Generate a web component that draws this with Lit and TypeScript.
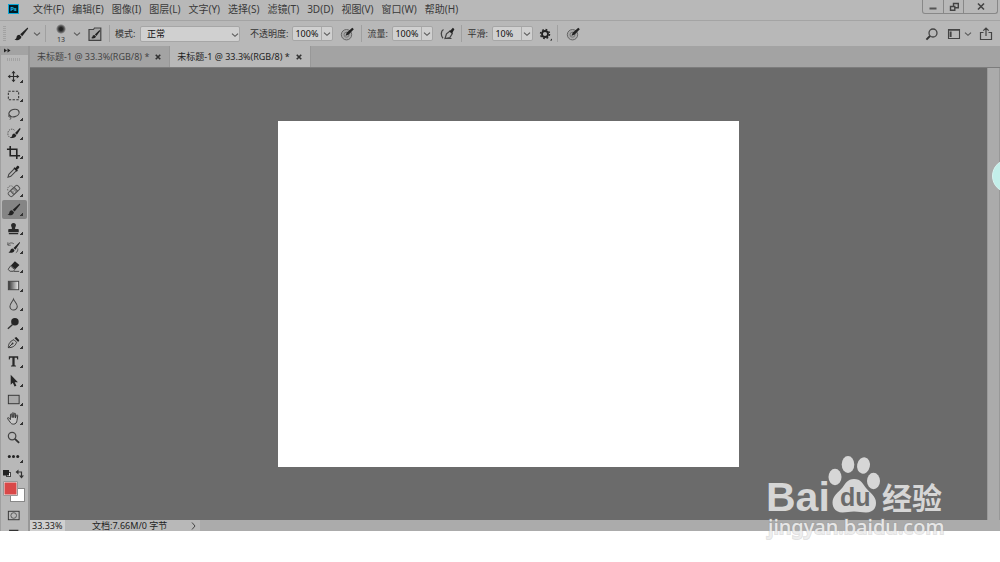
import { LitElement, html, svg, css, nothing, type SVGTemplateResult } from "lit";
import { customElement, property, state } from "lit/decorators.js";
import { classMap } from "lit/directives/class-map.js";

const brush = svg`<path d="M14.6 1.6 7.2 8.2l2 2 6-7.6z" fill="#222"/><path d="M6.4 8.8c-2 0-2.6 1.2-2.9 2.6-.2 1-.8 1.8-2 2.3 2.800 1 6.400.4 7-2.900z" fill="#222"/>`;
const smallBrush = svg`<path d="M14.800 2 9.600 7.400l2 2 4-6.400z" fill="#222"/><path d="M9 8c-2 0-2.200 1.300-2.500 2.400-.2.900-.7 1.500-1.700 2 2.600.8 5.600.2 6.200-2.600z" fill="#222"/>`;

const icons: Record<string, SVGTemplateResult> = {
  brush,
  move: svg`<path d="M8 3v10M3 8h10" stroke="#2c2c2c" stroke-width="1.200"/><path d="M8 1.800 5.800 4.500h4.400zM8 14.200l-2.200-2.700h4.400zM1.800 8l2.700-2.200v4.400zM14.200 8l-2.700-2.200v4.400z" fill="#2c2c2c"/>`,
  marquee: svg`<rect x="2.500" y="3.500" width="11" height="9" stroke="#333" stroke-width="1.100" stroke-dasharray="2.500 1.500"/>`,
  lasso: svg`<ellipse cx="8.500" cy="6.500" rx="5.600" ry="3.900" transform="rotate(-15 8.500 6.500)" stroke="#444" stroke-width="1.200"/><path d="M3.500 8.500c-1.500 1-.5 2.600.8 2 1.500-.7 0-2.200-.8-1.500M4.500 10.500c1.200 1 .6 2-.3 3" stroke="#444"/>`,
  quick: svg`<path d="M9 4.500C7.500 2.500 3 3 2.200 6.500S3 12.500 6 12.500" stroke="#555" stroke-dasharray="1.500 1"/>${smallBrush}`,
  crop: svg`<path d="M4.500 1v10.500H15M1 4.500h10.500V15" stroke="#222" stroke-width="1.700"/>`,
  dropper: svg`<path d="m9 5-6 6-.9 3 3-.9 6-6" stroke="#444" stroke-width="1.100"/><path d="m8 4.500 1.200-1 1 .8 1.400-2c1-1.200 3.400.5 2.300 2l-2 1.700.8 1-1.200 1.200z" fill="#222"/>`,
  heal: svg`<path d="M2 8c-1.500-4 3-6.500 5.500-4" stroke="#666" stroke-dasharray="1.500 1"/><g transform="rotate(-43 8.500 8.500)"><rect x="1.700" y="5.700" width="13.600" height="5.600" rx="1.800" fill="#b8b8b8" stroke="#555"/><rect x="5.700" y="5.700" width="5.600" height="5.600" fill="#8b8b8b" stroke="#555"/><path d="M7.500 7.500h2M7.500 9.500h2" stroke="#eee" stroke-dasharray="1 1"/></g>`,
  stamp: svg`<path d="M8 2a2.600 2.600 0 0 0-2.400 3.600c.5 1.100.9 1.600.6 3H3.400c-.7 0-1 .5-1 1.200V12h11.200V9.800c0-.7-.3-1.200-1-1.200H9.800c-.3-1.400.1-1.900.6-3A2.600 2.600 0 0 0 8 2zM3 12.800h10v1.200H3z" fill="#292929"/>`,
  history: svg`<path d="M2 5c2-2.500 5-2.200 6.500-.8M2 2.500V5.500h3M12.500 9c.5 2-.5 4-2 4.600" stroke="#555"/><path d="M14.600 2 8 8.500l2 2 5-7.500zM7.400 9c-1.800 0-2.500 1-2.800 2.200-.2.900-1 1.600-2 2 2.600 1 6 .3 6.500-2.400z" fill="#222"/>`,
  eraser: svg`<path d="m9.500 2.500 4.800 3.800-4.500 4.700-4.600-4z" fill="#222"/><path d="m4.800 7.400 4.600 4-1.700 1.700H4.400l-2.200-2zM8 13.200h6" stroke="#444" stroke-width="1"/>`,
  gradient: svg`<defs><linearGradient id="g"><stop stop-color="#333"/><stop offset="1" stop-color="#eee"/></linearGradient></defs><rect x="2.500" y="3.500" width="11" height="9" fill="url(#g)" stroke="#444"/>`,
  blur: svg`<path d="M8 2.200C7 5 4.200 7 4.200 10a3.900 3.900 0 0 0 7.800 0C12 7 9 5 8 2.200z" stroke="#444" stroke-width="1.100"/>`,
  dodge: svg`<circle cx="9.500" cy="6.200" r="4" fill="#262626"/><path d="m7 9-5 4.600" stroke="#333" stroke-width="1.500"/>`,
  pen: svg`<path d="M2.500 13.500c0-3 .8-6.500 6-8.500l2.700 2.700c-1.200 4.500-4.700 5.800-8.700 5.800zm0 0 4-4" stroke="#333"/><circle cx="7" cy="9" r="1" fill="#333"/><path d="m9 3.300 2-1.300 3.200 3.500-1.200 2z" fill="#222"/>`,
  type: svg`<path d="M3 2.500h10v3.300h-1L11.500 4H9.200v8l1.500.4v1H5.300v-1l1.500-.4V4H4.500L4 5.800H3z" fill="#282828"/>`,
  select: svg`<path d="M5 1.800v10.700l2.300-2 1.800 4 2-.9-1.800-3.800h3.400z" fill="#262626"/>`,
  shape: svg`<rect x="2.500" y="3.500" width="11.500" height="9" fill="#aaa" stroke="#333"/>`,
  hand: svg`<path d="M4.500 12 2 8.600c-1-1.400.4-2 1.200-1l1.500 1.600V4c0-1.200 1.500-1.200 1.600 0L6.600 7V2.700c0-1.200 1.600-1.200 1.700 0V7l.4-3.900c.1-1.100 1.600-.9 1.500.2L10.100 7.500l.9-2.700c.4-1 1.700-.6 1.500.4l-.8 5c-.3 2-1.200 3.800-3.500 3.800S5.300 13.200 4.500 12z" fill="#c6c6c6" stroke="#333"/>`,
  zoom: svg`<circle cx="6.500" cy="6.500" r="4" stroke="#444" stroke-width="1.300"/><path d="m9.500 9.500 4.500 4.200" stroke="#333" stroke-width="2"/>`,
  more: svg`<g fill="#222"><circle cx="3.500" cy="8" r="1.600"/><circle cx="8" cy="8" r="1.600"/><circle cx="12.500" cy="8" r="1.600"/></g>`,
  mask: svg`<rect x="2.500" y="3.500" width="11.500" height="9" stroke="#333"/><circle cx="8.200" cy="8" r="3" stroke="#555"/>`,
  screen: svg`<path d="M4 3.500h8.500v6H4z" stroke="#333" stroke-width="1.400"/>`,
  panel: svg`<path d="M2 3.500h4.500l1-1.500H13.800v12.300H2z" stroke="#444" stroke-width="1.200" fill="#a6a6a6"/><path d="m12.500 4-4.600 4.500 1.500 1.500 3.800-5zM7.400 9c-1.500 0-1.800 1-2 1.800-.2.700-.6 1-1.400 1.300 2 .7 4.600.2 5-1.600z" fill="#222"/>`,
  target: svg`<circle cx="7.500" cy="8.700" r="5.200" stroke="#666" fill="#a8a8a8"/><circle cx="7.500" cy="8.700" r="2.500" stroke="#777"/><path d="m6.500 9.800 1.300-3.300 5.500-4.700 1.500 1.400-5 5.200z" fill="#222"/>`,
  airbrush: svg`<path d="M4.500 3.500C1.800 5 1.500 9.500 4 12.200" stroke="#444" stroke-width="1.300"/><path d="m6 12.500 1.500-4.600L11 5l2.300 2.500-2.400 4zM6 12.500h6.500" stroke="#444" stroke-width="1.200"/><path d="m10 5 1.400-.6 2.500-2.600 1.500 1.400-1.700 3-.5 1.300z" fill="#222"/>`,
  gear: svg`<circle cx="8" cy="8" r="3" stroke="#222" stroke-width="1.800"/><circle cx="8" cy="8" r="4.500" stroke="#222" stroke-width="1.500" stroke-dasharray="1.750 1.784"/><path d="M15 12.500v2h-2z" fill="#222"/>`,
  search: svg`<circle cx="9" cy="7" r="4" stroke="#444" stroke-width="1.300"/><path d="m6 10-3.600 3.600" stroke="#333" stroke-width="1.900"/>`,
  layout: svg`<path d="M2.500 3.500h11v9h-11z" stroke="#444" stroke-width="1.100"/><path d="M2 3h12v1.700H2zM3.600 5.600h2V11h-2z" fill="#444"/>`,
  share: svg`<path d="M5.500 6.500H2.500v7h11v-7h-3M8 10V2M5.300 4.700 8 2l2.700 2.700" stroke="#444" stroke-width="1.200"/>`,
  minimize: svg`<path d="M4.500 9.500h7" stroke="#555" stroke-width="2"/>`,
  restore: svg`<path d="M7.500 4.500h4.800v4.300H7.500z" stroke="#444" stroke-width="1.400"/><path d="M4.500 7.500h4.300v3.800H4.500z" stroke="#444" stroke-width="1.400" fill="#b8b8b8"/>`,
  close: svg`<path d="m5 4.500 6 6m0-6-6 6" stroke="#444" stroke-width="1.600"/>`,
  tabClose: svg`<path d="m5 5 6 6m0-6-6 6" stroke="#333" stroke-width="2.200"/>`,
  chevron: svg`<path d="M5 6.700 8 9.300l3-2.600" stroke="#555" stroke-width="1.100"/>`,
};

const icon = (name: string) =>
  html`<svg class="icon" viewBox="0 0 16 16" fill="none" aria-hidden="true">${icons[name]}</svg>`;

const shared = css`
  * { box-sizing: border-box; }
  button, input, select {
    font: inherit;
    color: inherit;
    margin: 0;
    padding: 0;
    border: 0;
    border-radius: 0;
    background: none;
    outline: none;
  }
  button { display: flex; align-items: center; justify-content: center; }
  .icon { width: 16px; height: 16px; flex: none; display: block; }
`;

@customElement("ps-menu-bar")
class MenuBar extends LitElement {
  static styles = [shared, css`
    :host { display: flex; height: 21px; border-bottom: 1px solid #a4a4a4; background: #b8b8b8; }
    .logo { width: 11px; height: 10px; margin: 4px 14px 0 8px; background: #001c26; border: 1px solid #0aa6d6; color: #16b8ea; font-size: 6px; line-height: 8px; font-weight: 700; text-align: center; flex: none; }
    .menus { display: flex; gap: 8px; height: 18px; flex: 1; }
    .menu { white-space: nowrap; color: #3a3a3a; }
    .window { display: flex; height: 14px; margin-right: 2px; border: 1px solid #888; border-top: 0; border-radius: 0 0 3px 3px; }
    .control { width: 20px; overflow: hidden; }
    .control + .control { border-left: 1px solid #888; }
    .control:last-child { width: 34px; }
  `];
  render() {
    const menus = ["文件(F)", "编辑(E)", "图像(I)", "图层(L)", "文字(Y)", "选择(S)", "滤镜(T)", "3D(D)", "视图(V)", "窗口(W)", "帮助(H)"];
    return html`
      <div class="logo">Ps</div>
      <nav class="menus">${menus.map((m) => html`<button class="menu">${m}</button>`)}</nav>
      <div class="window">
        <button class="control" aria-label="最小化">${icon("minimize")}</button>
        <button class="control" aria-label="还原">${icon("restore")}</button>
        <button class="control" aria-label="关闭">${icon("close")}</button>
      </div>`;
  }
}

@customElement("ps-options-bar")
class OptionsBar extends LitElement {
  static styles = [shared, css`
    :host { display: flex; align-items: center; gap: 4px; height: 25px; padding: 0 4px 0 3px; background: #b8b8b8; font-size: 9px; color: #333; }
    .grip { width: 3px; height: 15px; margin-right: 1px; background: repeating-linear-gradient(#a2a2a2 0 1px, transparent 1px 2px); }
    .divider { width: 1px; height: 17px; margin-right: 1px; background: #a0a0a0; }
    .group { display: flex; align-items: center; gap: 2px; }
    .tool { width: 20px; height: 20px; }
    .narrow { width: 16px; }
    .arrow { width: 8px; height: 18px; overflow: hidden; }
    .preset { width: 20px; flex-direction: column; font-size: 7px; line-height: 8px; gap: 2px; }
    .dot { width: 10px; height: 10px; border-radius: 50%; background: radial-gradient(#222 20%, #555 45%, transparent 72%); }
    .label { min-width: 21px; white-space: nowrap; }
    .mode { position: relative; width: 100px; height: 16px; margin-right: 6px; border: 1px solid #a6a6a6; border-radius: 2px; background: #d0d0d0; color: #111; }
    .mode select { appearance: none; width: 100%; height: 14px; padding-left: 6px; }
    .mode .icon { position: absolute; right: -4px; top: 0; pointer-events: none; }
    .field { display: flex; width: 41px; height: 15px; border: 1px solid #a6a6a6; border-radius: 2px; background: #d0d0d0; color: #111; }
    .field input { width: 28px; padding-left: 2px; }
    .field button { width: 12px; overflow: hidden; border-left: 1px solid #aaa; }
    .spacer { flex: 1; }
  `];
  private field(id: string, label: string, value: string) {
    return html`<label class="label" for=${id}>${label}:</label>
      <div class="field"><input id=${id} .value=${value} /><button aria-label=${label}>${icon("chevron")}</button></div>`;
  }
  render() {
    const arrow = html`<button class="arrow" aria-label="展开">${icon("chevron")}</button>`;
    const divider = html`<span class="divider"></span>`;
    return html`
      <span class="grip"></span>
      <div class="group"><button class="tool" aria-label="画笔">${icon("brush")}</button>${arrow}</div>
      ${divider}
      <div class="group"><button class="preset"><span class="dot"></span>13</button>${arrow}</div>
      <button class="tool" aria-label="画笔设置">${icon("panel")}</button>
      ${divider}
      <label class="label" for="mode">模式:</label>
      <div class="mode"><select id="mode"><option>正常</option></select>${icon("chevron")}</div>
      ${this.field("opacity", "不透明度", "100%")}
      <button class="tool" aria-label="压力">${icon("target")}</button>
      ${divider}
      ${this.field("flow", "流量", "100%")}
      <button class="tool" aria-label="喷枪">${icon("airbrush")}</button>
      ${divider}
      ${this.field("smooth", "平滑", "10%")}
      <button class="narrow" aria-label="平滑选项">${icon("gear")}</button>
      ${divider}
      <button class="tool" aria-label="压力大小">${icon("target")}</button>
      <span class="spacer"></span>
      <button class="tool" aria-label="搜索">${icon("search")}</button>
      <div class="group"><button class="narrow" aria-label="工作区">${icon("layout")}</button>${arrow}</div>
      <button class="tool" aria-label="共享">${icon("share")}</button>`;
  }
}

@customElement("ps-toolbar")
class Toolbar extends LitElement {
  @state() private active = "brush";
  static styles = [shared, css`
    :host { display: flex; flex-direction: column; width: 30px; flex: none; overflow: hidden; background: #b8b8b8; border-left: 1px solid #a0a0a0; border-right: 2px solid #989898; }
    .head { height: 9px; flex: none; background: #a3a3a3; }
    .head svg { display: block; width: 7px; height: 5px; margin: 2px 0 0 3px; }
    .grip { width: 14px; height: 3px; margin: 3px 6px 6px; flex: none; background: repeating-linear-gradient(90deg, #a2a2a2 0 1px, transparent 1px 2px); }
    .tool { position: relative; width: 25px; height: 19px; margin-left: 1px; padding-right: 2px; flex: none; border-radius: 2px; }
    .tool .icon { width: 15px; height: 15px; }
    .active { background: #858585; }
    .corner { position: absolute; right: 4px; bottom: 3px; width: 3px; height: 3px; background: linear-gradient(135deg, transparent 45%, #333 50%); }
    .colors { display: block; width: 27px; height: 40px; flex: none; }
  `];
  render() {
    const tools = ["move", "marquee", "lasso", "quick", "crop", "dropper", "heal", "brush", "stamp", "history", "eraser", "gradient", "blur", "dodge", "pen", "type", "select", "shape", "hand", "zoom", "more"];
    return html`
      <div class="head"><svg viewBox="0 0 7 5"><path d="M0 .5 3 2.500 0 4.500zM3.500.5l3 2-3 2z" fill="#222" /></svg></div>
      <div class="grip"></div>
      ${tools.map((t) => html`
        <button class=${classMap({ tool: true, active: t === this.active })} aria-label=${t} @click=${() => (this.active = t)}>
          ${icon(t)}${t === "zoom" ? nothing : html`<span class="corner"></span>`}
        </button>`)}
      <svg class="colors" viewBox="0 0 27 40" fill="none">
        <rect x="5.500" y="6.500" width="4" height="4" fill="#eee" stroke="#444" />
        <rect x="2" y="4" width="6" height="5.500" fill="#222" />
        <path d="M16.500 6h4v5" stroke="#333" stroke-width="1.200" />
        <path d="m17.500 3.500-3 2.500 3 2.500zM18 9.500l2.500 3 2.500-3z" fill="#333" />
        <rect x="9.500" y="22.500" width="14" height="13" fill="#fff" stroke="#888" />
        <rect x="3" y="16" width="13" height="13" fill="#d94848" stroke="#eee" stroke-width="1" />
        <path d="M2.500 29.500v-14h14v14z" stroke="#999" />
      </svg>
      <button class="tool" aria-label="快速蒙版">${icon("mask")}</button>
      <button class="tool" aria-label="屏幕模式">${icon("screen")}</button>`;
  }
}

@customElement("ps-tabs")
class Tabs extends LitElement {
  @property({ type: Array }) titles: string[] = [];
  @state() private current = 1;
  static styles = [shared, css`
    :host { display: flex; height: 22px; flex: none; background: #a3a3a3; border-bottom: 1px solid #7c7c7c; color: #444; font-size: 9px; }
    .tab { display: flex; align-items: center; gap: 5px; padding: 0 7px; border-right: 1px solid #989898; }
    .current { background: #b8b8b8; color: #222; }
    .title { white-space: nowrap; }
    .close { width: 8px; height: 16px; overflow: hidden; }
    .close .icon { width: 12px; height: 12px; }
  `];
  render() {
    return this.titles.map((t, i) => html`
      <div class=${classMap({ tab: true, current: i === this.current })}>
        <button class="title" @click=${() => (this.current = i)}>${t}</button>
        <button class="close" aria-label="关闭">${icon("tabClose")}</button>
      </div>`);
  }
}

@customElement("baidu-mark")
class BaiduMark extends LitElement {
  static styles = css`
    :host { display: block; width: 184px; }
    svg { display: block; width: 100%; overflow: visible; }
    .word { font: 700 41px "Liberation Sans", Arial, sans-serif; fill: #d6d6d6; }
    .du { font: 700 25px "Liberation Sans", Arial, sans-serif; fill: #6b6b6b; }
    .han { font: 700 30px "Noto Sans CJK SC", sans-serif; fill: #d6d6d6; }
    .url { font: 500 20px "Noto Sans", sans-serif; fill: #f0f0f0; fill-opacity: 0.9; stroke: #999; stroke-opacity: 0.3; stroke-width: 2px; paint-order: stroke; }
  `;
  render() {
    return html`<svg viewBox="0 0 184 90">
      <text class="word" x="0" y="57">Bai</text>
      <g fill="#d6d6d6">
        <ellipse cx="69" cy="23" rx="6.500" ry="8.300" /><ellipse cx="82" cy="10.500" rx="6.300" ry="8.500" />
        <ellipse cx="97.500" cy="11.500" rx="6.400" ry="8.300" transform="rotate(12 97.500 11.500)" /><ellipse cx="107.500" cy="27" rx="6.500" ry="8.300" />
        <path d="M88 25c7 0 9 5 12 9 4 5 10 8 10 15 0 6-4 9.500-10 9.500-5 0-7-1-12-1s-7 1-11.500 1c-6 0-10-4-10-10 0-7 6-10 10-15 3-4 5-8.500 11.500-8.500z" />
      </g>
      <text class="du" x="74" y="52">du</text>
      <text class="han" x="116" y="55">经验</text>
      <text class="url" x="2" y="80">jingyan.baidu.com</text>
    </svg>`;
  }
}

@customElement("app-root")
class AppRoot extends LitElement {
  static styles = [shared, css`
    :host { display: block; position: relative; min-height: 100vh; overflow: hidden; background: #fff; font: 10px/14px "Noto Sans", "Noto Sans CJK SC", sans-serif; }
    .app { display: flex; flex-direction: column; height: calc(100vh - 31px); background: #b8b8b8; }
    .body { display: flex; flex: 1; min-height: 0; }
    .document { display: flex; flex-direction: column; flex: 1; min-width: 0; }
    .view { display: flex; flex: 1; min-height: 0; }
    .stage { display: flex; align-items: center; justify-content: center; flex: 1; background: #6b6b6b; }
    .canvas { width: 48.2%; aspect-ratio: 4 / 3; background: #fff; }
    .scroll { width: 13px; background: #ababab; border-left: 1px solid #9a9a9a; border-right: 1px solid #989898; }
    .status { display: flex; height: 11px; flex: none; background: #ababab; font-size: 9px; line-height: 11px; color: #222; }
    .zoom { width: 35px; padding-left: 2px; background: #d0d0d0; }
    .info { display: flex; justify-content: space-between; width: 135px; padding: 0 4px 0 27px; background: #b8b8b8; white-space: nowrap; }
    .info svg { width: 5px; height: 11px; }
    .ball { position: absolute; right: -26px; top: 159px; width: 34px; height: 34px; border-radius: 50%; background: #c3efea; border: 1px solid #d8f3f0; }
    .mark { position: absolute; right: 50px; bottom: 18px; }
  `];
  render() {
    const title = "未标题-1 @ 33.3%(RGB/8) *";
    return html`
      <div class="app">
        <ps-menu-bar></ps-menu-bar>
        <ps-options-bar></ps-options-bar>
        <div class="body">
          <ps-toolbar></ps-toolbar>
          <main class="document">
            <ps-tabs .titles=${[title, title]}></ps-tabs>
            <div class="view">
              <div class="stage"><div class="canvas"></div></div>
              <div class="scroll"></div>
            </div>
            <footer class="status">
              <input class="zoom" aria-label="缩放" value="33.33%" />
              <button class="info"><span>文档:7.66M/0 字节</span><svg viewBox="0 0 5 11" fill="none"><path d="m1 2.500 3 3.500-3 3.500" stroke="#444" /></svg></button>
            </footer>
          </main>
        </div>
      </div>
      <button class="ball" aria-label="助手"></button>
      <baidu-mark class="mark"></baidu-mark>`;
  }
}
